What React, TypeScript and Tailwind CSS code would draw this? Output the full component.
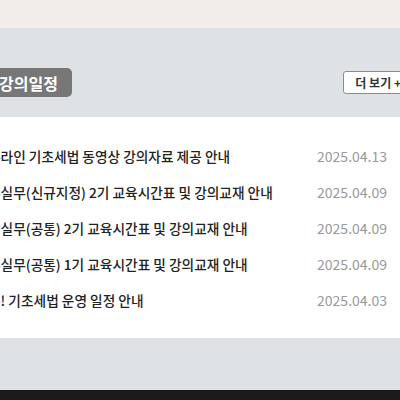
const notices = [
  { title: "온라인 기초세법 동영상 강의자료 제공 안내", date: "2025.04.13" },
  { title: "무실무(신규지정) 2기 교육시간표 및 강의교재 안내", date: "2025.04.09" },
  { title: "무실무(공통) 2기 교육시간표 및 강의교재 안내", date: "2025.04.09" },
  { title: "무실무(공통) 1기 교육시간표 및 강의교재 안내", date: "2025.04.09" },
  { title: "픈! 기초세법 운영 일정 안내", date: "2025.04.03" },
];

export default function App() {
  return (
    <div className="w-[400px] h-[400px] overflow-hidden font-['Noto_Sans_CJK_KR','Noto_Sans',sans-serif]">
      {/* top strip */}
      <div className="h-[28px] bg-[#f2ede9]" />

      <section className="bg-[#dfe2e5] pt-[40px] pb-[52px]">
        <div className="ml-[-14px] w-[427px]">
          {/* header */}
          <div className="flex items-center justify-between">
            <h2 className="h-[29px] flex items-center pl-[13px] pr-[14px] rounded-[5px] bg-[#777777] text-white text-[16px] font-bold leading-none">
              강의일정
            </h2>
            <button className="h-[23px] px-[11px] flex items-center rounded-[3px] border border-[#8c8c8c] bg-white text-[12px] font-bold text-[#333] leading-none">
              더 보기 +
            </button>
          </div>

          {/* list */}
          <ul className="mt-[20px] bg-white pt-[21px] pb-[20px]">
            {notices.map((n) => (
              <li
                key={n.title}
                className="h-[36px] flex items-center justify-between pl-[2px] pr-[26px]"
              >
                <span className="text-[13.7px] font-medium text-[#222] whitespace-nowrap">
                  {n.title}
                </span>
                <span className="text-[14px] text-[#999] whitespace-nowrap">
                  {n.date}
                </span>
              </li>
            ))}
          </ul>
        </div>
      </section>

      <footer className="h-[20px] bg-[#1c1a1b]" />
    </div>
  );
}
